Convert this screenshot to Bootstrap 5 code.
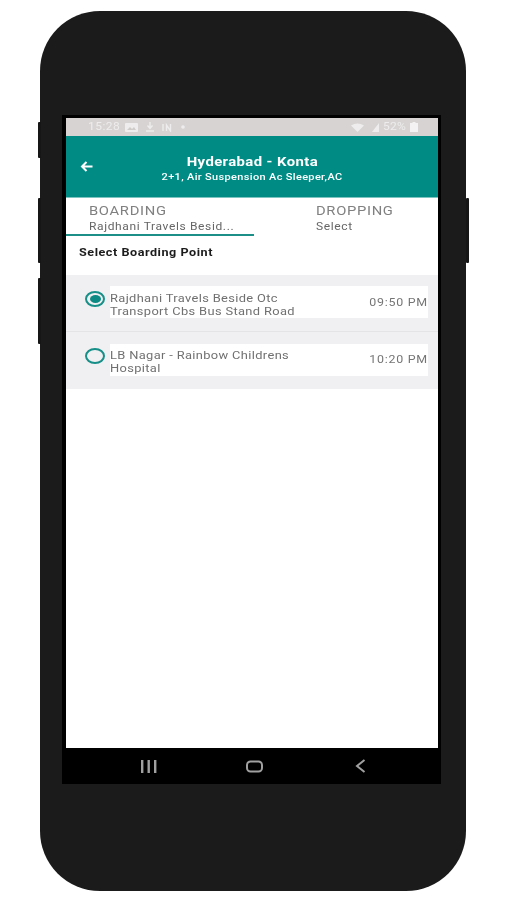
<!DOCTYPE html>
<html lang="en">
<head>
<meta charset="utf-8">
<title>Select Boarding Point</title>
<link href="https://cdn.jsdelivr.net/npm/bootstrap@5.3.0/dist/css/bootstrap.min.css" rel="stylesheet">
<style>
html,body{height:100%;background:#fff;font-family:Roboto,"Liberation Sans",sans-serif;overflow:hidden}
.stage{width:506px;height:900px;padding:11px 40px 9px}
.phone{position:relative;width:426px;height:880px;background:#1b1b1b;border-radius:60px;padding:104px 25px 0 22px}
.sidekey{position:absolute;width:3px;background:#161616;border-radius:1px}
.k1{left:-2px;top:111px;height:36px}
.k2{left:-2px;top:187px;height:65px}
.k3{left:-2px;top:267px;height:66px}
.k4{right:-3px;top:187px;height:65px}
.bezel{height:669px;background:#000;padding:3px 3px 0 4px}
.shot{height:630px;background:#fff;filter:blur(.6px)}
.wide{display:inline-block;transform-origin:left center;white-space:nowrap}
.wide.mid{transform-origin:center}
.wide.end{transform-origin:right center}
.x109{transform:scaleX(1.09)}
.x113{transform:scaleX(1.135)}
.x114{transform:scaleX(1.145)}
.x117{transform:scaleX(1.17)}
.x119{transform:scaleX(1.19)}
.statusbar{height:18px;background:#d7d3d3;color:#eeecec;font-size:10.5px;padding:0 20px 0 22px}
.clock{width:33px;letter-spacing:.4px}
.pct{width:23px;letter-spacing:.2px}
.appbar{height:62px;background:#008c85;color:#fff;position:relative;border-bottom:1px solid #7cc4bf}
.backbtn{position:absolute;left:14px;top:25px;line-height:0}
.apptitle{font-size:13px;font-weight:700;letter-spacing:.35px;line-height:16px;padding-top:18px}
.appsub{font-size:9.6px;font-weight:500;letter-spacing:.3px;line-height:12px;margin-top:1px}
.tabrow{height:38px}
.tabcell{height:38px;padding-left:23px}
.tabcell.on{width:188px;border-bottom:2px solid #1c8f88}
.tabcell.off{padding-left:62px}
.tabhead{font-size:13px;letter-spacing:.6px;line-height:15px;padding-top:5px;color:#808080}
.tabval{font-size:10.6px;letter-spacing:.55px;line-height:13px;margin-top:2px;color:#666}
.pickhead{font-size:10.6px;font-weight:700;letter-spacing:.45px;color:#1c1c1c;padding:10px 0 0 13px;height:39px;line-height:13px}
.pointlist{background:#f0f0f2}
.pointrow{height:56px;padding:11px 10px 0 19px}
.pointrow+.pointrow{border-top:1px solid #e4e4e6;height:58px;padding-top:12px}
.radio-mark{width:20px;height:16px;border:2px solid #168f88;border-radius:50%;flex:none;margin-top:5px;display:flex;align-items:center;justify-content:center}
.pointrow+.pointrow .radio-mark{margin-top:4px}
.radio-mark i{display:block;width:11px;height:8px;border-radius:50%;background:#0c8a83}
.pointbox{background:#fff;height:32px;margin-left:5px;flex:1;color:#707070;font-size:11px;letter-spacing:.3px;line-height:13px;padding-top:6px}
.pointrow+.pointrow .pointbox{padding-top:5px}
.pointtime{font-size:11.4px;letter-spacing:.7px;color:#757575;margin-top:4px}
.softkeys{height:36px;padding:0 72px 0 75px}
.softkeys svg{display:block}
.homekey{margin-right:4px}
</style>
</head>
<body>
<div class="stage">
  <div class="phone">
    <span class="sidekey k1"></span><span class="sidekey k2"></span><span class="sidekey k3"></span><span class="sidekey k4"></span>
    <div class="bezel">
      <div class="shot">
        <div class="statusbar d-flex align-items-center justify-content-between">
          <div class="d-flex align-items-center gap-1">
            <span class="clock"><span class="wide x114">15:28</span></span>
            <svg width="13" height="9" viewBox="0 0 13 9"><rect x="0" y="0" width="13" height="9" rx="1" fill="#eeecec"/><path d="M2 7 5 4l2 2 2-2 2 3Z" fill="#cfcbcb"/></svg>
            <svg class="ms-1" width="8" height="10" viewBox="0 0 8 10" fill="none" stroke="#eeecec" stroke-width="1.4"><path d="M4 0v6M1.500 3.500 4 6.500l2.500-3M0 9h8"/></svg>
            <svg class="ms-1" width="11" height="9" viewBox="0 0 11 9" fill="none" stroke="#eeecec" stroke-width="1.4"><path d="M1 1v7M4.500 8V2l4 6V1"/></svg>
            <svg width="4" height="4" viewBox="0 0 4 4" class="ms-1"><circle cx="2" cy="2" r="1.8" fill="#eeecec"/></svg>
          </div>
          <div class="d-flex align-items-center">
            <svg width="13" height="9" viewBox="0 0 13 9"><path d="M0 2.500Q6.500-1.500 13 2.500L6.500 9Z" fill="#eeecec"/></svg>
            <svg class="ms-2 me-1" width="7" height="9" viewBox="0 0 7 9"><path d="M7 0V9H0Z" fill="#eeecec"/></svg>
            <span class="pct"><span class="wide x114">52%</span></span>
            <svg class="ms-1" width="8" height="10" viewBox="0 0 8 10"><path d="M2.500 0h3v1H8v9H0V1h2.500Z" fill="#f4f2f2"/></svg>
          </div>
        </div>
        <div class="appbar text-center">
          <span class="backbtn"><svg width="13" height="11" viewBox="0 0 13 11" fill="none" stroke="#fff" stroke-width="2"><path d="M12.500 5.500H2M6.500 1 2 5.500 6.500 10"/></svg></span>
          <div class="apptitle"><span class="wide mid x114">Hyderabad - Konta</span></div>
          <div class="appsub"><span class="wide mid x114">2+1, Air Suspension Ac Sleeper,AC</span></div>
        </div>
        <div class="tabrow d-flex">
          <div class="tabcell on">
            <div class="tabhead"><span class="wide x113">BOARDING</span></div>
            <div class="tabval"><span class="wide x113">Rajdhani Travels Besid...</span></div>
          </div>
          <div class="tabcell off">
            <div class="tabhead"><span class="wide x113">DROPPING</span></div>
            <div class="tabval"><span class="wide x113">Select</span></div>
          </div>
        </div>
        <div class="pickhead"><span class="wide x119">Select Boarding Point</span></div>
        <div class="pointlist">
          <div class="pointrow d-flex">
            <span class="radio-mark"><i></i></span>
            <div class="pointbox d-flex justify-content-between">
              <div class="wide x117">Rajdhani Travels Beside Otc<br>Transport Cbs Bus Stand Road</div>
              <div class="pointtime wide end x109">09:50 PM</div>
            </div>
          </div>
          <div class="pointrow d-flex">
            <span class="radio-mark"></span>
            <div class="pointbox d-flex justify-content-between">
              <div class="wide x117">LB Nagar - Rainbow Childrens<br>Hospital</div>
              <div class="pointtime wide end x109">10:20 PM</div>
            </div>
          </div>
        </div>
      </div>
      <div class="softkeys d-flex align-items-center justify-content-between">
        <svg width="16" height="13" viewBox="0 0 16 13" fill="#a0a0a0"><rect x="0" y="0" width="2.400" height="13"/><rect x="6.500" y="0" width="2.400" height="13"/><rect x="13" y="0" width="2.400" height="13"/></svg>
        <svg class="homekey" width="17" height="13" viewBox="0 0 17 13" fill="none" stroke="#a0a0a0" stroke-width="2"><rect x="1" y="1.500" width="15" height="10" rx="3.500"/></svg>
        <svg width="11" height="14" viewBox="0 0 11 14" fill="none" stroke="#a0a0a0" stroke-width="2"><path d="M9.500 1 2 7l7.500 6"/></svg>
      </div>
    </div>
  </div>
</div>
<script src="https://cdn.jsdelivr.net/npm/bootstrap@5.3.0/dist/js/bootstrap.bundle.min.js"></script>
</body>
</html>
